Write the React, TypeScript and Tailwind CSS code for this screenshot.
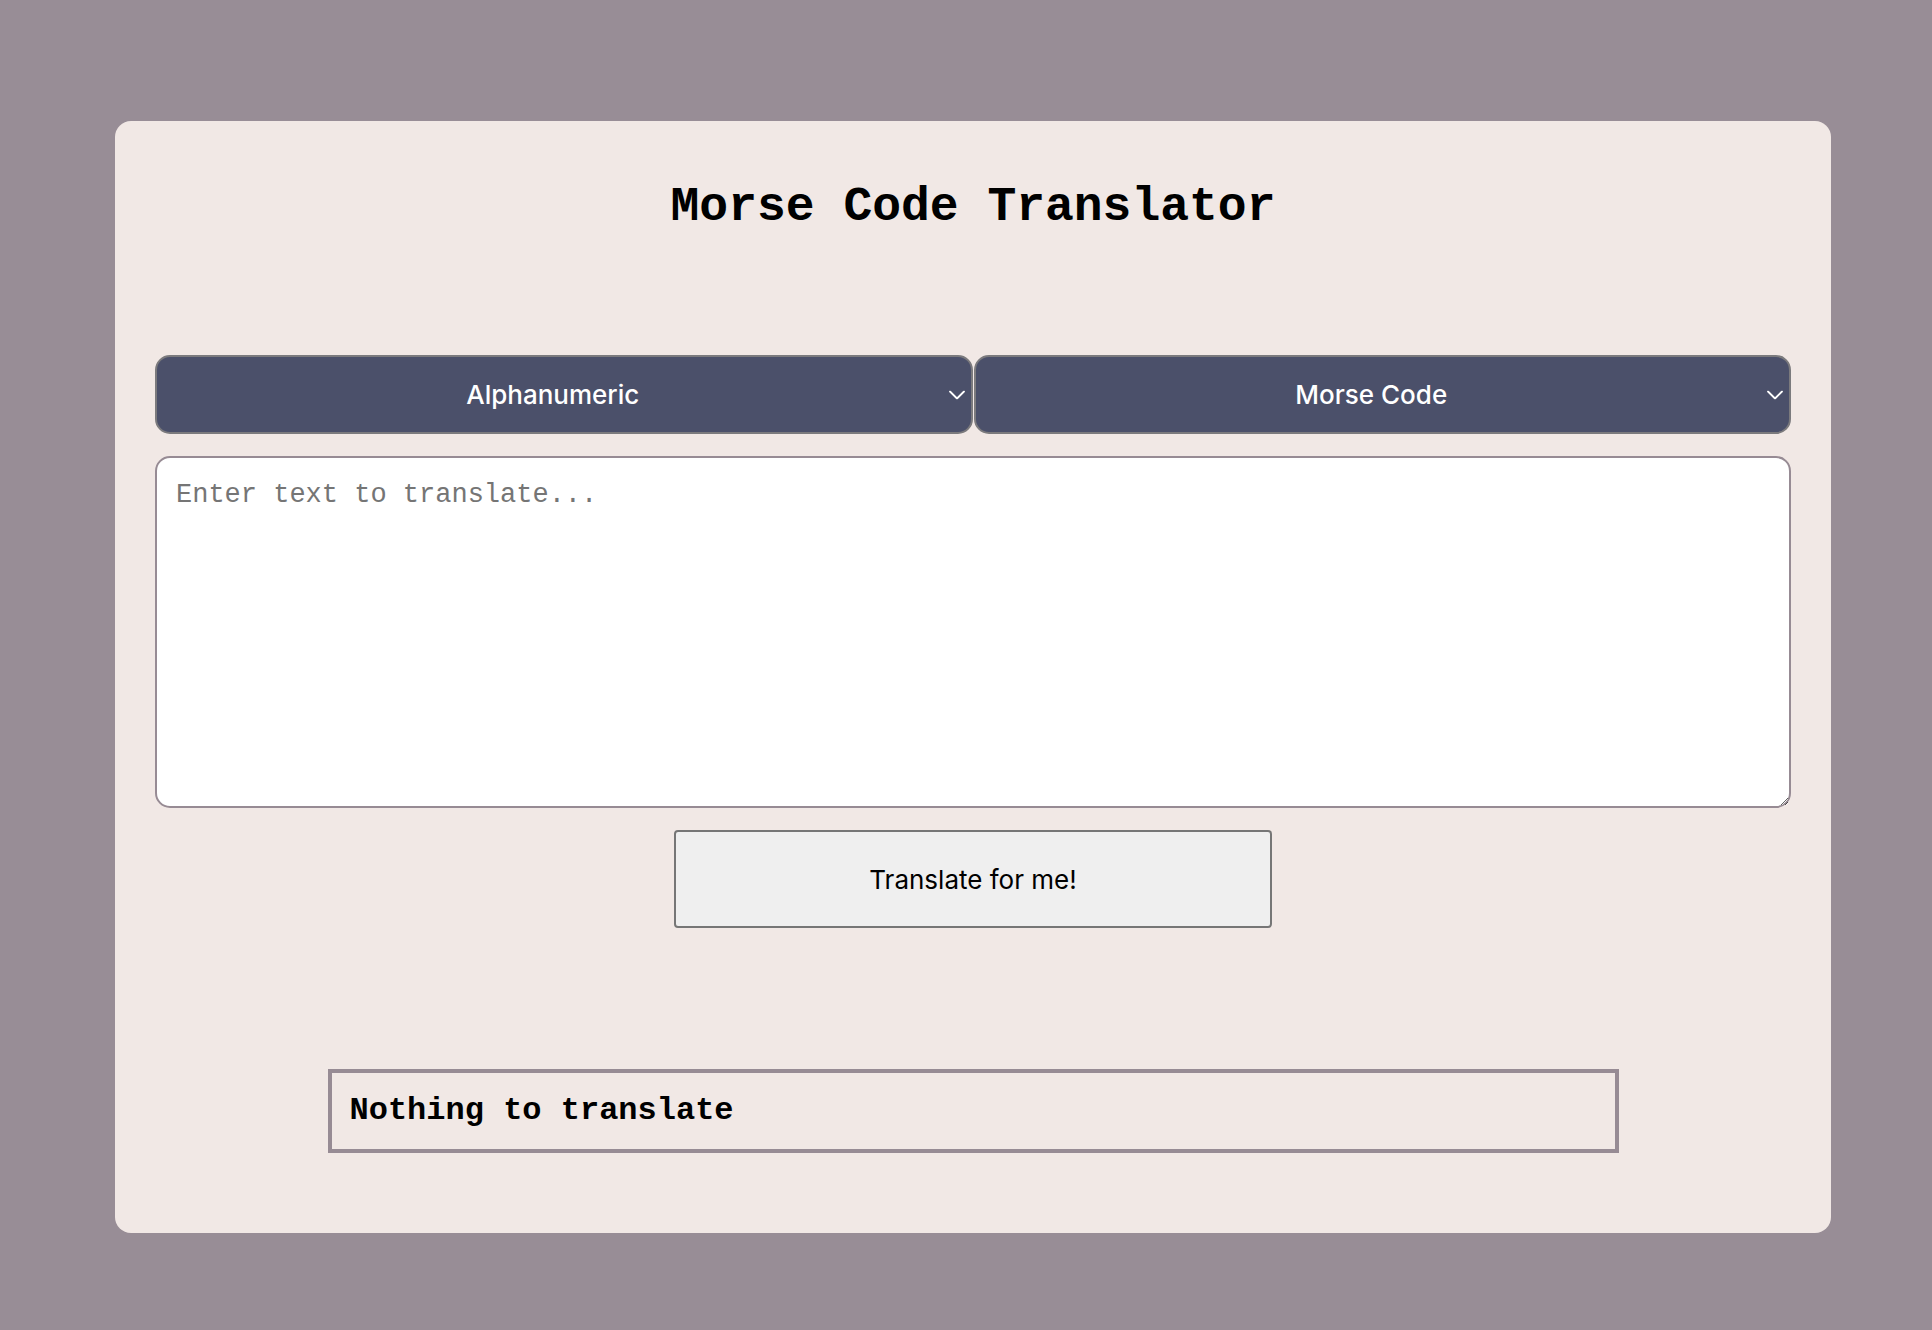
import React from "react";

function Chevron() {
  return (
    <svg
      width="16"
      height="9"
      viewBox="0 0 16 9"
      fill="none"
      className="pointer-events-none absolute right-[8px] top-1/2 -translate-y-1/2"
    >
      <path d="M1 1 L8 8 L15 1" stroke="white" strokeWidth="1.8" strokeLinecap="round" strokeLinejoin="round" />
    </svg>
  );
}

function Select({ value, options }: { value: string; options: string[] }) {
  return (
    <div className="relative">
      <select
        defaultValue={value}
        className="h-[79px] w-full appearance-none rounded-[15px] border-2 border-[#7b7a7d] bg-[#4b506a] pl-0 pr-[22px] font-['Inter',sans-serif] text-[26px] font-medium text-white outline-none [text-align-last:center]"
      >
        {options.map((o) => (
          <option key={o} value={o}>
            {o}
          </option>
        ))}
      </select>
      <Chevron />
    </div>
  );
}

export default function App() {
  return (
    <div className="min-h-[1330px] w-full overflow-hidden bg-[#988d96] pt-[121px]">
      <div className="ml-[115px] flex h-[1112px] w-[1716px] flex-col rounded-[16px] bg-[#f1e8e5] px-[40px] pt-[59px]">
        <h1 className="text-center font-['Liberation_Mono',monospace] text-[48px] font-bold leading-[54px] text-black">
          Morse Code Translator
        </h1>
        <div className="mt-[121px] grid grid-cols-2 gap-[1px]">
          <Select value="Alphanumeric" options={["Alphanumeric", "Morse Code"]} />
          <Select value="Morse Code" options={["Morse Code", "Alphanumeric"]} />
        </div>
        <textarea
          placeholder="Enter text to translate..."
          className="mt-[22px] h-[352px] w-full rounded-[15px] border-2 border-[#978b94] bg-white px-[19px] pb-[20px] pt-[22px] font-['Liberation_Mono',monospace] text-[27px] leading-[30px] text-black outline-none placeholder:text-[#757575]"
        />
        <button className="mx-auto mt-[22px] h-[98px] w-[598px] rounded-[4px] border-2 border-[#767676] bg-[#efefef] font-['Inter',sans-serif] text-[26px] text-black">
          Translate for me!
        </button>
        <div className="mx-auto mt-[141px] h-[84px] w-[1291px] border-4 border-[#978b94] px-[18px] py-[20px]">
          <p className="font-['Liberation_Mono',monospace] text-[32px] font-bold leading-[36px] text-black">
            Nothing to translate
          </p>
        </div>
      </div>
    </div>
  );
}
